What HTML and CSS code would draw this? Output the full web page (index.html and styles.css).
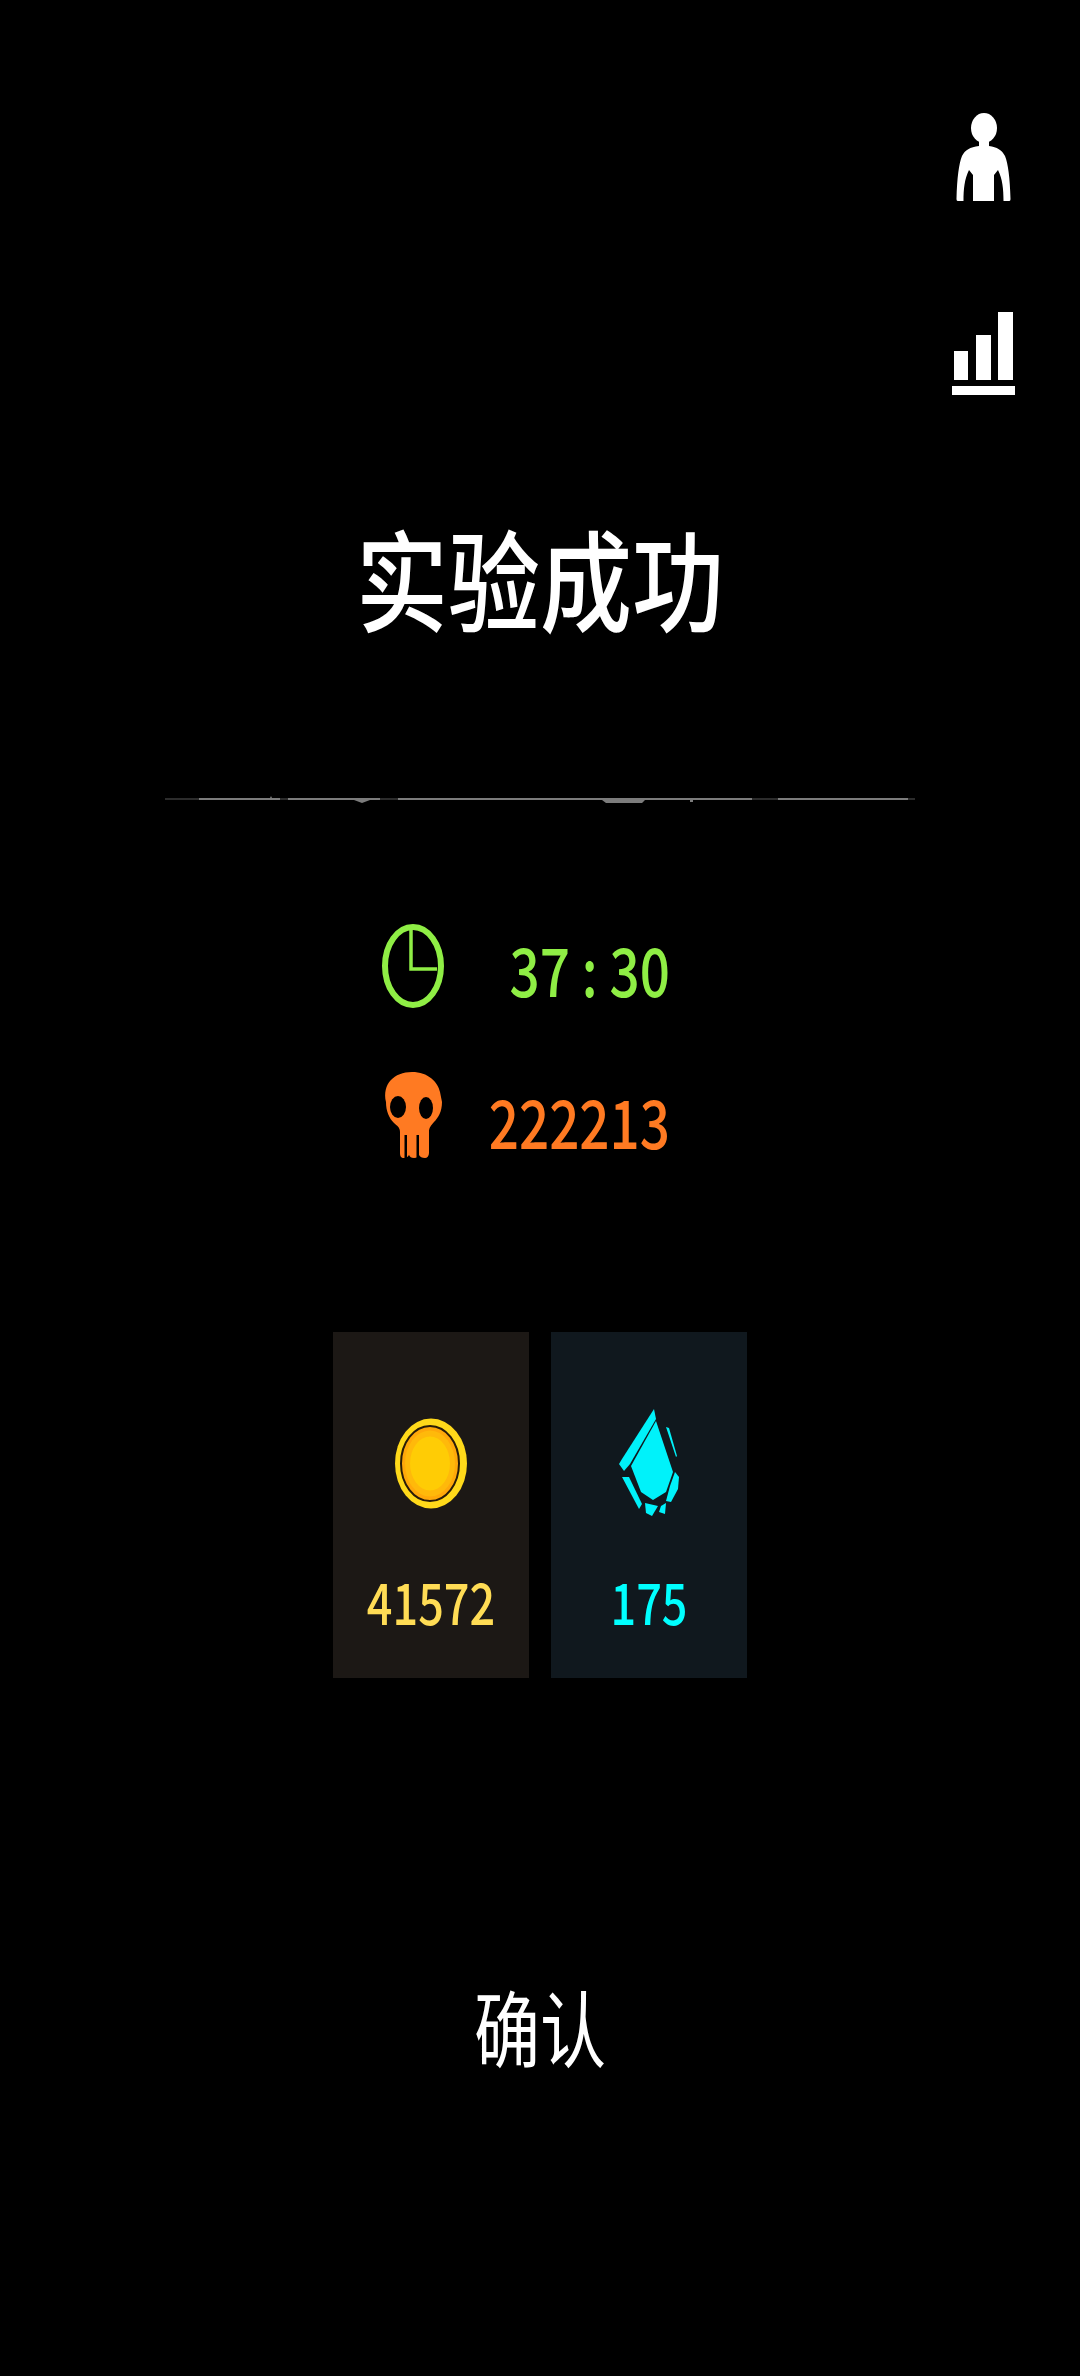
FILE: index.html
```html
<!DOCTYPE html>
<html>
  <head>
    <link rel="stylesheet" href="styles.css">
  </head>
  <body>
    <div class="screen">
      <div class="side-icons">
        <svg width="56" height="90" viewBox="0 0 56 90">
          <ellipse cx="28" cy="15" rx="13" ry="15" fill="#fff"/>
          <path fill="#fff" d="M23 28h10v5c8 1 13 4 16 10 3 7 5 22 5.500 43 0 2-1 2-2 2h-5c0-12-1-22-5.500-31l-4 5v26H17V62l-4-5c-4.500 9-5.500 19-5.500 31h-5c-1 0-2 0-2-2 .5-21 2.500-36 5.500-43 3-6 8-9 17-10z"/>
        </svg>
        <svg width="64" height="84" viewBox="0 0 64 84">
          <rect x="2" y="39" width="14" height="29" fill="#fff"/>
          <rect x="24" y="23" width="15" height="45" fill="#fff"/>
          <rect x="46" y="0" width="15" height="68" fill="#fff"/>
          <rect x="0" y="74" width="63" height="9" fill="#fff"/>
        </svg>
      </div>

      <h1 class="title">实验成功</h1>

      <svg class="divider" width="750" height="10" viewBox="0 0 750 10">
        <rect x="0" y="4" width="750" height="2" fill="#2c2c2c"/>
        <path fill="#7c7c7c" d="M34 4h71l1-2 1 2h8v2h-81zM123 4h92v2h-10l-8 3-8-3h-66zM233 4h354v2h-107l-3 3h-36l-4-3h-204zM613 4h130v2H613z"/>
        <rect x="525" y="6" width="3" height="2" fill="#7c7c7c"/>
      </svg>

      <div class="stats">
        <div class="stat stat-time">
          <svg width="62" height="84" viewBox="0 0 62 84">
            <ellipse cx="31" cy="42" rx="28" ry="39" fill="none" stroke="#8fee45" stroke-width="6"/>
            <path d="M29 5v40h26" fill="none" stroke="#8fee45" stroke-width="3.500"/>
          </svg>
          <span class="num">37 : 30</span>
        </div>
        <div class="stat stat-kills">
          <svg width="60" height="86" viewBox="0 0 60 86">
            <path fill="#ff7a22" d="M30 0C46 0 56 10 58 20l2 10c0 10-4 16-8 20-3 4-5 5-5 10v21c0 3-2 5-4 5-3 0-5-1-6-3-1 2-2 3-5 3s-4-1-5-3c-1 2-3 3-5 3-3 0-4-2-4-5V60c0-5-3-6-6-9-5-5-8-12-8-21C0 12 12 0 30 0z"/>
            <ellipse cx="16" cy="35" rx="8" ry="11" fill="#000"/>
            <ellipse cx="44" cy="36" rx="7" ry="11" fill="#000"/>
            <rect x="22.500" y="63" width="2.500" height="23" fill="#000"/>
            <rect x="34.500" y="63" width="2.500" height="23" fill="#000"/>
          </svg>
          <span class="num">222213</span>
        </div>
      </div>

      <div class="rewards">
        <div class="card card-gold">
          <svg width="72" height="109" viewBox="0 -9.500 72 109">
            <ellipse cx="36" cy="45" rx="36" ry="45" fill="#ffd91a"/>
            <ellipse cx="35" cy="45" rx="29" ry="37.500" fill="#ffa80a" stroke="#2a1c08" stroke-width="2"/>
            <ellipse cx="35" cy="45" rx="25" ry="33" fill="#ffb90a"/>
            <ellipse cx="35" cy="45" rx="20" ry="27" fill="#ffcc05"/>
          </svg>
          <span class="num">41572</span>
        </div>
        <div class="card card-gem">
          <svg width="60" height="109" viewBox="0 0 60 109">
            <path fill="#00f2fa" d="M37 12l17 51-7 20-13 8-12-8-10-26z"/>
            <path fill="#00f2fa" d="M35 0l2 10-26 45-6 7-5-7 3-5z"/>
            <path fill="#00f2fa" d="M47 18l3 1 8 28-1 1z"/>
            <path fill="#00f2fa" d="M56 63l4 5-1 12-7 13-5-1 4-15z"/>
            <path fill="#00f2fa" d="M3 68h7l13 27-3 5z"/>
            <path fill="#00f2fa" d="M26 94l13 3-6 10-6-3z"/>
            <path fill="#00f2fa" d="M42 97l5-3-1 11-6-2z"/>
          </svg>
          <span class="num">175</span>
        </div>
      </div>

      <div class="confirm">确认</div>
    </div>
  </body>
</html>
```

FILE: styles.css
```css
body {
  margin: 0;
  background-color: #000;
  font-family: "Noto Sans CJK SC", "Noto Sans", sans-serif;
}

.screen {
  width: 1080px;
  height: 2376px;
  overflow: hidden;
  display: flex;
  flex-direction: column;
  align-items: center;
}

.side-icons {
  align-self: flex-end;
  display: flex;
  flex-direction: column;
  align-items: center;
  gap: 109px;
  margin: 113px 64px 0 0;
  flex-shrink: 0;
}

.title {
  margin: 115px 0 0 0;
  height: 130px;
  line-height: 130px;
  font-size: 92px;
  font-weight: 500;
  color: #fff;
  transform: scaleY(1.2);
}

.divider {
  display: block;
  margin-top: 153px;
  flex-shrink: 0;
}

.stats {
  display: flex;
  flex-direction: column;
  margin: 119px 28px 0 0;
  gap: 63px;
}

.stat {
  width: 288px;
  height: 86px;
  display: flex;
  align-items: center;
  justify-content: space-between;
}

.num {
  display: inline-block;
  font-size: 53px;
  font-weight: 500;
  line-height: 60px;
  transform: scaleY(1.27);
}

.stat-time { color: #8fee45; }
.stat-kills { color: #ff7a22; }

.stat-time .num { margin-top: 4px; }
.stat-kills .num { margin-top: 10px; }

.rewards {
  display: flex;
  gap: 22px;
  margin-top: 174px;
}

.card {
  width: 196px;
  height: 346px;
  display: flex;
  flex-direction: column;
  align-items: center;
}

.card svg {
  margin-top: 77px;
  flex-shrink: 0;
}

.card .num {
  font-size: 45px;
  margin-top: 53px;
}

.card-gold {
  background-color: #1c1815;
  color: #ffdc55;
}

.card-gem {
  background-color: #10181e;
  color: #0ff;
}

.confirm {
  margin-top: 302px;
  font-size: 66px;
  line-height: 90px;
  color: #fff;
  transform: scaleY(1.25);
}
```
